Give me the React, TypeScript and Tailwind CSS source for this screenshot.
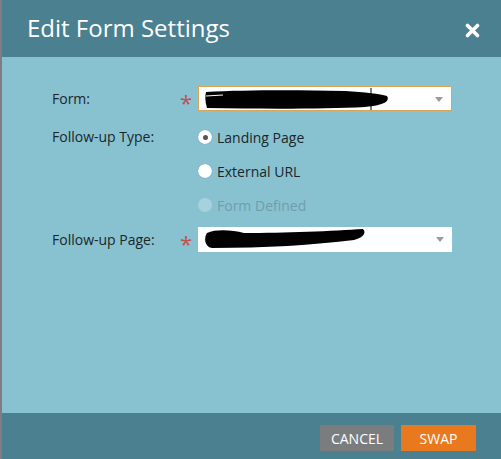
import React from 'react';

const Scribble: React.FC<{ variant: 1 | 2 }> = ({ variant }) =>
  variant === 1 ? (
    <svg width="190" height="22" viewBox="0 0 190 22" className="absolute left-[6px] top-[1px]">
      <path d="M1 4 C40 2, 90 2, 140 3 C160 4, 175 6, 182 8 C185 13, 180 17, 160 19 C120 21, 60 21, 2 20 C0 14, 0 8, 1 4 Z" fill="#000" />
      <path d="M1 8 L18 7" stroke="#fff" strokeWidth="1" />
      <path d="M166 0 L166 22" stroke="#000" strokeWidth="1" />
    </svg>
  ) : (
    <svg width="170" height="22" viewBox="0 0 170 22" className="absolute left-[6px] top-[1px]">
      <path d="M3 5 C12 1, 28 2, 40 5 C80 5, 130 3, 159 1 C162 4, 161 9, 150 12 C110 17, 60 20, 8 20 C0 19, 0 9, 3 5 Z" fill="#000" />
    </svg>
  );

const Select: React.FC<{ focused?: boolean; variant: 1 | 2 }> = ({ focused, variant }) => (
  <div
    className={`relative h-[25px] w-[254px] bg-white ${focused ? 'border border-[#d9a45c]' : ''}`}
  >
    <Scribble variant={variant} />
    <div className="absolute right-[8px] top-[10px] w-0 h-0 border-l-[4px] border-r-[4px] border-t-[5px] border-l-transparent border-r-transparent border-t-[#9a9a9a]" />
  </div>
);

const Radio: React.FC<{ checked?: boolean; disabled?: boolean; label: string }> = ({ checked, disabled, label }) => (
  <div className="flex items-center h-[34px] gap-[5px]">
    <div
      className={`w-[14px] h-[14px] rounded-full flex items-center justify-center ${disabled ? 'bg-[#a6d2de]' : 'bg-white shadow-[0_0_1px_rgba(0,0,0,0.4)]'}`}
    >
      {checked && <div className="w-[5px] h-[5px] rounded-full bg-[#555]" />}
    </div>
    <span className={`text-[14px] ${disabled ? 'text-[#6f9eab]' : 'text-[#1a262a]'}`}>{label}</span>
  </div>
);

const App: React.FC = () => {
  return (
    <div className="flex w-[501px] h-[459px] overflow-hidden" style={{ fontFamily: '"Open Sans", sans-serif' }}>
      <div className="w-[2px] bg-[#7e7e7e]" />
      <div className="flex-1 flex flex-col">
        {/* Header */}
        <div className="h-[57px] bg-[#4a8090] flex items-center justify-between pl-[25px] pr-[21px]">
          <h1 className="text-[24px] text-white font-normal pb-[2px]">Edit Form Settings</h1>
          <svg width="15" height="15" viewBox="0 0 15 15" className="mt-[4px]">
            <path d="M2.5 2.5 L12.5 12.5 M12.5 2.5 L2.5 12.5" stroke="#fff" strokeWidth="3.6" strokeLinecap="round" />
          </svg>
        </div>

        {/* Body */}
        <div className="flex-1 bg-[#88c2d1] pl-[50px] pt-[29px] text-[14px] text-[#1a262a]">
          <div className="flex items-center h-[25px]">
            <span className="w-[128px]">Form:</span>
            <span className="w-[18px] text-[#c0504d] text-[22px] leading-none pt-[7px]">*</span>
            <Select focused variant={1} />
          </div>

          <div className="flex mt-[9px]">
            <span className="w-[146px] leading-[34px]">Follow-up Type:</span>
            <div className="flex flex-col">
              <Radio checked label="Landing Page" />
              <Radio label="External URL" />
              <Radio disabled label="Form Defined" />
            </div>
          </div>

          <div className="flex items-center h-[25px] mt-[5px]">
            <span className="w-[128px]">Follow-up Page:</span>
            <span className="w-[18px] text-[#c0504d] text-[22px] leading-none pt-[7px]">*</span>
            <Select variant={2} />
          </div>
        </div>

        {/* Footer */}
        <div className="h-[46px] bg-[#4a8090] flex items-center justify-end gap-[7px] pr-[25px] pt-[4px]">
          <button className="w-[74px] h-[26px] bg-[#7a7c7e] text-white text-[14px]">CANCEL</button>
          <button className="w-[75px] h-[26px] bg-[#e8791f] text-white text-[14px]">SWAP</button>
        </div>
      </div>
    </div>
  );
};

export default App;
